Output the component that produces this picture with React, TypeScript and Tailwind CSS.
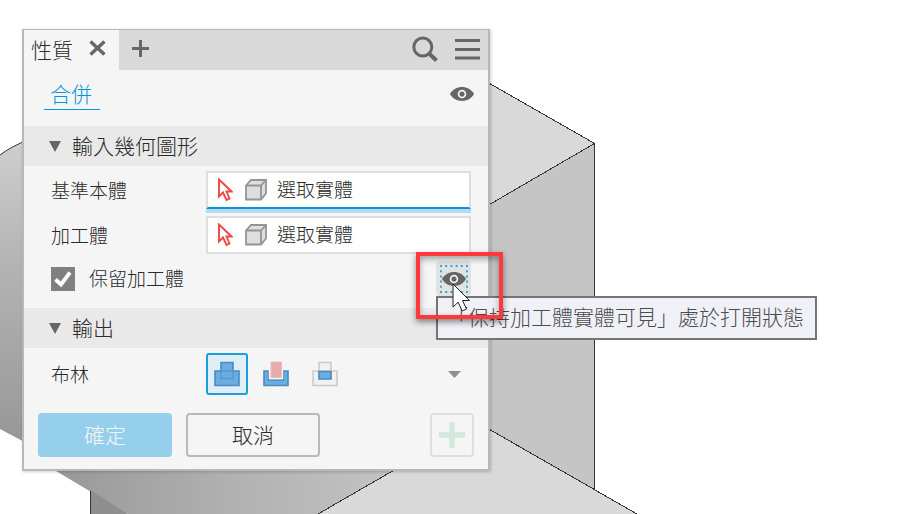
import { useState } from "react";
import type { ReactNode } from "react";

type BooleanMode = "join" | "cut" | "intersect";

function ModelBackground() {
  return (
    <svg
      className="absolute inset-0 h-full w-full"
      viewBox="0 0 919 514"
      preserveAspectRatio="xMinYMin slice"
      aria-hidden="true"
    >
      <defs>
        <linearGradient id="side" x1="0" y1="0" x2="0" y2="1">
          <stop offset="0" stopColor="#cfcfcf" />
          <stop offset="0.4" stopColor="#b4b4b4" />
          <stop offset="1" stopColor="#979797" />
        </linearGradient>
        <linearGradient id="bore" x1="0" y1="0" x2="1" y2="0">
          <stop offset="0" stopColor="#979797" />
          <stop offset="0.5" stopColor="#b0b0b0" />
          <stop offset="1" stopColor="#c4c4c4" />
        </linearGradient>
      </defs>
      <path d="M0 155 Q10 147 30 139 V445 L0 429Z" fill="url(#side)" />
      <path d="M0 155 Q10 147 30 139" fill="none" stroke="#333" />
      <path d="M480 78 L595 144 L480 210Z" fill="#d9d9d9" />
      <path d="M480 210 L595 144 V490 L480 424Z" fill="#c5c5c5" />
      <path d="M400 465 L480 424 L637 514 H318Z" fill="#d9d9d9" />
      <path d="M46 465 H403 L318 514 H128Z" fill="url(#bore)" />
      <path d="M90 490 L128 514 H90Z" fill="#8e8e8e" />
      <path
        d="M480 78 L594.5 143.5 L480 210 M594.5 143.5 V489.5 M480 424 L637 514 M403 465 L318 514 M90.5 491 V514"
        fill="none"
        stroke="#333"
        shapeRendering="crispEdges"
      />
    </svg>
  );
}

function EyeIcon() {
  return (
    <svg width="24" height="14" viewBox="0 0 24 14" aria-hidden="true">
      <path d="M0 7 C5 -2.3 19 -2.3 24 7 C19 16.3 5 16.3 0 7Z" fill="#666" />
      <circle cx="12" cy="7" r="3.4" fill="#666" stroke="#f4f4f4" strokeWidth="1.7" />
    </svg>
  );
}

function SelectCursorIcon() {
  return (
    <svg width="15" height="24" viewBox="0 0 15 24" aria-hidden="true">
      <path
        d="M1 1.5 V18.5 L5 14.5 L8.5 22 L11.5 20.5 L8.5 13.5 H13.5Z"
        fill="#fff"
        stroke="#e94b43"
        strokeWidth="1.9"
      />
    </svg>
  );
}

function CubeIcon() {
  return (
    <svg width="22" height="22" viewBox="0 0 22 22" aria-hidden="true">
      <path
        d="M1 6.5 L6 1 H21 V14.5 L16 20.5 H1Z M1 6.5 H16 V20.5 M16 6.5 L21 1"
        fill="#dedede"
        stroke="#949494"
        strokeWidth="1.8"
      />
    </svg>
  );
}

function BooleanIcon({ mode }: { mode: BooleanMode }) {
  return (
    <svg width="26" height="26" viewBox="0 0 26 26" aria-hidden="true">
      {mode === "join" && (
        <>
          <path
            d="M1 10 H7 V1.5 H19 V10 H25 V24.5 H1Z"
            fill="#68aee4"
            stroke="#4b8abb"
            strokeWidth="1.6"
          />
          <path d="M7 10 H19 V17.5 H7Z" fill="none" stroke="#5798ca" strokeWidth="1.4" />
        </>
      )}
      {mode === "cut" && (
        <>
          <path
            d="M1 10 H5.5 V19 H20.5 V10 H25 V24.5 H1Z"
            fill="#68aee4"
            stroke="#4b8abb"
            strokeWidth="1.6"
          />
          <path d="M5.8 8 H20.2 V18.2 H5.8Z" fill="#f8f5f5" />
          <path d="M8 1 H18.5 V16.5 H8Z" fill="#e6abab" stroke="#e9bcbc" />
        </>
      )}
      {mode === "intersect" && (
        <>
          <path
            d="M1 10 H25 V24.5 H1Z M7 10 V1.5 H19 V10"
            fill="#f1f1f1"
            stroke="#cbcbcb"
            strokeWidth="1.6"
          />
          <path d="M7 10.5 H19 V18 H7Z" fill="#68aee4" stroke="#4b8abb" strokeWidth="1.6" />
        </>
      )}
    </svg>
  );
}

function SectionHeader({ children }: { children: ReactNode }) {
  return (
    <h2>
      <button
        type="button"
        aria-expanded="true"
        className="flex h-10 w-full items-center gap-[11px] bg-[#e9e9e9] pl-[25px] text-[21px] leading-8"
      >
        <svg width="12" height="11" viewBox="0 0 12 11" aria-hidden="true">
          <path d="M0 0 H12 L6 11Z" fill="#666" />
        </svg>
        <span className="pb-[2px]">{children}</span>
      </button>
    </h2>
  );
}

interface SelectorRowProps {
  id: string;
  label: string;
  active?: boolean;
}

function SelectorRow({ id, label, active }: SelectorRowProps) {
  return (
    <div className="grid grid-cols-[155px_1fr] items-center">
      <label htmlFor={id}>{label}</label>
      <button
        id={id}
        type="button"
        className={`flex h-[38px] items-center border-2 bg-white pl-[10px] ${
          active
            ? "border-[#dedede] border-b-[#0696d7] shadow-[0_4px_0_#b5dcee]"
            : "border-[#dedede]"
        }`}
      >
        <SelectCursorIcon />
        <span className="ml-3 mr-[10px]">
          <CubeIcon />
        </span>
        <span className="pb-[2px]">選取實體</span>
      </button>
    </div>
  );
}

const modes: { key: BooleanMode; label: string }[] = [
  { key: "join", label: "接合" },
  { key: "cut", label: "切割" },
  { key: "intersect", label: "相交" },
];

export default function App() {
  const [keepTool, setKeepTool] = useState(true);
  const [mode, setMode] = useState<BooleanMode>("join");

  return (
    <main className="relative min-h-screen overflow-hidden bg-white pl-[22px] pt-[29px] font-['Noto_Sans_CJK_TC',sans-serif] text-[19px] font-light leading-7 text-[#2b2b2b]">
      <ModelBackground />

      <section className="relative w-full max-w-[468px] border-2 border-t border-[#b8b8b8] bg-[#f5f5f5] shadow-[1px_1px_3px_rgba(0,0,0,0.2)]">
        {/* Tab bar */}
        <header className="flex h-10 items-center bg-[#d9d9d9]">
          <div className="flex h-10 w-[95px] items-center justify-between bg-[#f5f5f5] pb-[2px] pl-[7px] pr-[13px] text-[21px]">
            性質
            <button type="button" aria-label="關閉" className="pb-[2px]">
              <svg width="17" height="16" viewBox="0 0 17 16" aria-hidden="true">
                <path
                  d="M1.5 1.5 L15.5 14.5 M15.5 1.5 L1.5 14.5"
                  stroke="#666"
                  strokeWidth="3.4"
                />
              </svg>
            </button>
          </div>
          <button type="button" aria-label="新增" className="ml-[13px] pb-1">
            <svg width="17" height="17" viewBox="0 0 17 17" aria-hidden="true">
              <path d="M8.5 0 V17 M0 8.5 H17" stroke="#666" strokeWidth="3" />
            </svg>
          </button>
          <button type="button" aria-label="搜尋" className="ml-auto pb-[2px]">
            <svg width="26" height="26" viewBox="0 0 26 26" aria-hidden="true">
              <circle cx="10.8" cy="11" r="9" fill="none" stroke="#666" strokeWidth="3" />
              <path d="M17 17.5 L24.5 24.5" stroke="#666" strokeWidth="4" />
            </svg>
          </button>
          <button type="button" aria-label="功能表" className="ml-[17px] mr-2 pb-[2px]">
            <svg width="25" height="21" viewBox="0 0 25 21" aria-hidden="true">
              <path d="M0 1.5 H25 M0 10.5 H25 M0 19 H25" stroke="#666" strokeWidth="3" />
            </svg>
          </button>
        </header>

        <div className="flex h-14 items-center justify-between pb-2 pl-5 pr-[14px]">
          <a
            href="#combine"
            className="h-8 w-14 border-b border-[#0696d7] pl-[6px] text-[21px] leading-[30px] text-[#0696d7]"
          >
            合併
          </a>
          <button type="button" aria-label="可見性">
            <EyeIcon />
          </button>
        </div>

        <SectionHeader>輸入幾何圖形</SectionHeader>
        <div className="pb-3 pl-[27px] pr-[17px] pt-[5px]">
          <div className="grid gap-[7px]">
            <SelectorRow id="base" label="基準本體" active />
            <SelectorRow id="tool" label="加工體" />
            <div className="flex h-[35px] items-center justify-between">
              <div className="flex items-center gap-[14px]">
                <span className="grid h-6 w-6 place-items-center">
                  <input
                    id="keep-tool"
                    type="checkbox"
                    checked={keepTool}
                    onChange={(e) => setKeepTool(e.target.checked)}
                    className="col-start-1 row-start-1 h-6 w-6 appearance-none bg-[#808080]"
                  />
                  {keepTool && (
                    <svg
                      width="18"
                      height="16"
                      viewBox="0 0 18 16"
                      className="pointer-events-none z-10 col-start-1 row-start-1"
                      aria-hidden="true"
                    >
                      <path
                        d="M1.5 8.5 L7 13.5 L16 1.5"
                        fill="none"
                        stroke="#fff"
                        strokeWidth="3.8"
                      />
                    </svg>
                  )}
                </span>
                <label htmlFor="keep-tool" className="pb-[2px]">
                  保留加工體
                </label>
              </div>

              <div className="relative z-20">
                <button
                  type="button"
                  aria-label="保持可見"
                  aria-describedby="visible-tip"
                  className="grid h-[35px] w-[35px] place-items-center rounded-sm bg-[#e2e2e2]"
                >
                  <svg width="28" height="28" viewBox="0 0 28 28" aria-hidden="true">
                    <path
                      d="M1 1 H27 V27 H1Z"
                      fill="none"
                      stroke="#27a3dc"
                      strokeWidth="1.8"
                      strokeDasharray="2 3.2"
                      strokeDashoffset="1"
                    />
                    <path d="M2 14 C7 4.8 21 4.8 26 14 C21 23.2 7 23.2 2 14Z" fill="#666" />
                    <circle cx="14" cy="14" r="3.4" fill="#666" stroke="#f4f4f4" strokeWidth="1.7" />
                  </svg>
                </button>

                <div
                  id="visible-tip"
                  role="tooltip"
                  className="absolute left-0 top-full h-11 w-[381px] whitespace-nowrap border-2 border-[#737578] bg-[#f0f0f7] pl-[9px] text-[21px] leading-9 text-[#4c4c4c]"
                >
                  「保持加工體實體可見」處於打開狀態
                </div>

                {/* Callout frame and mouse pointer */}
                <div className="pointer-events-none absolute -left-5 -top-[9px] h-[67px] w-[87px] border-4 border-[#ff3939] shadow-[0_3px_6px_rgba(0,0,0,0.45),inset_0_3px_6px_rgba(0,0,0,0.35)]" />
                <svg
                  className="pointer-events-none absolute left-4 top-[22px]"
                  width="19"
                  height="29"
                  viewBox="0 0 19 29"
                  aria-hidden="true"
                >
                  <path
                    d="M1 1 V24 L6.2 19.2 L10.2 28 L14.5 26 L10.5 17.5 H17.5Z"
                    fill="#fff"
                    stroke="#222"
                  />
                </svg>
              </div>
            </div>
          </div>
        </div>

        <SectionHeader>輸出</SectionHeader>
        <div className="grid grid-cols-[155px_1fr] items-center pl-[27px] pr-[27px] pt-[5px]">
          <span id="boolean-label">布林</span>
          <div
            role="group"
            aria-labelledby="boolean-label"
            className="flex items-center gap-[7px]"
          >
            {modes.map((m) => (
              <button
                key={m.key}
                type="button"
                aria-label={m.label}
                aria-pressed={mode === m.key}
                onClick={() => setMode(m.key)}
                className={`grid h-[42px] w-[42px] place-items-center rounded-[3px] border-2 ${
                  mode === m.key
                    ? "border-[#1b9fda] bg-[#e0eff7]"
                    : "border-transparent"
                }`}
              >
                <BooleanIcon mode={m.key} />
              </button>
            ))}
            <button type="button" aria-label="更多" className="ml-auto">
              <svg width="13" height="7" viewBox="0 0 13 7" aria-hidden="true">
                <path d="M0 0 H13 L6.5 7Z" fill="#909090" />
              </svg>
            </button>
          </div>
        </div>

        <footer className="flex gap-[14px] px-[14px] pb-3 pt-[18px] text-[21px]">
          <button
            type="button"
            disabled
            className="h-11 w-[134px] rounded bg-[#96cfeb] pb-[2px] text-[#f5f5f5]"
          >
            確定
          </button>
          <button
            type="button"
            className="h-11 w-[134px] rounded border-2 border-[#b9b9b9] pb-[2px]"
          >
            取消
          </button>
          <button
            type="button"
            disabled
            aria-label="套用"
            className="ml-auto grid h-11 w-11 place-items-center rounded border-2 border-[#dedede]"
          >
            <svg width="26" height="26" viewBox="0 0 26 26" aria-hidden="true">
              <path d="M13 0 V26 M0 13 H26" stroke="#d2e8da" strokeWidth="5.5" />
            </svg>
          </button>
        </footer>
      </section>
    </main>
  );
}
